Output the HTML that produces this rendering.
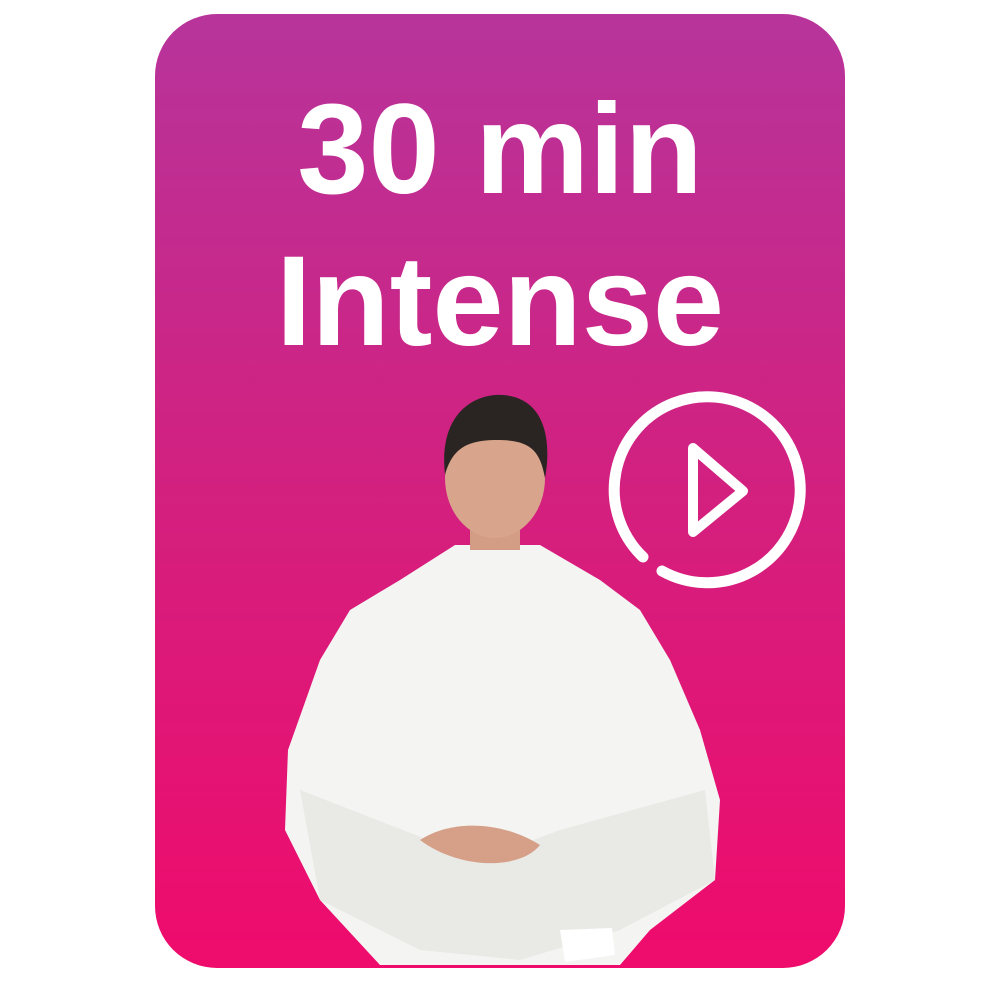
<!DOCTYPE html>
<html><head><style>
html,body{margin:0;padding:0;width:1000px;height:1000px;background:#fff;overflow:hidden}
.card{position:absolute;left:155px;top:14px;width:690px;height:954px;border-radius:62px;background:linear-gradient(180deg,#b7349b 0%,#d3207f 50%,#ef0b6c 100%);overflow:hidden}
.t{position:absolute;left:0;width:1000px;text-align:center;color:#fff;font-family:"Liberation Sans",sans-serif;font-weight:bold;font-size:128px;line-height:1}
</style></head><body>
<div class="card"></div>
<div class="t" style="top:86px">30 min</div>
<div class="t" style="top:238px">Intense</div>
<svg width="1000" height="1000" style="position:absolute;left:0;top:0">
<path d="M662 571 A93 93 0 1 0 643 557" fill="none" stroke="#fff" stroke-width="11" stroke-linecap="round"/>
<path d="M693 448 L743 491 L693 532 Z" fill="none" stroke="#fff" stroke-width="10" stroke-linejoin="round"/>
<path d="M455 545 L540 545 L600 580 L640 610 L670 660 L700 730 L720 800 L715 880 L650 930 L620 965 L380 965 L320 900 L285 830 L288 750 L320 660 L350 610 L400 580 Z" fill="#f4f4f2"/>
<path d="M300 790 L390 825 L480 860 L560 830 L705 790 L715 880 L620 930 L520 960 L420 950 L320 900 Z" fill="#e9e9e6"/>
<rect x="470" y="520" width="50" height="30" fill="#d39c84"/>
<ellipse cx="495" cy="478" rx="50" ry="60" fill="#d9a48c"/>
<path d="M445 475 C438 410 478 393 503 395 C545 398 552 440 545 478 C540 450 530 440 497 440 C465 440 452 450 445 475 Z" fill="#2a2522"/>
<path d="M420 840 C450 820 500 820 540 845 C520 870 460 870 420 840 Z" fill="#d6a088"/>
<path d="M560 930 L612 928 L615 955 L565 962 Z" fill="#fff"/>
</svg>
</body></html>
